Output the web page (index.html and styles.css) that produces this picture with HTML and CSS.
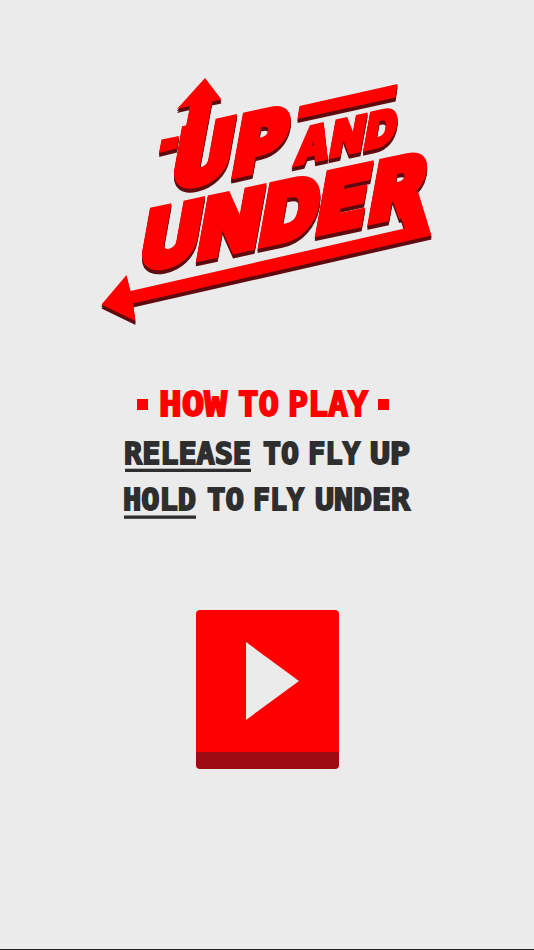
FILE: index.html
```html
<!DOCTYPE html>
<html lang="en">
<head>
    <meta charset="UTF-8">
    <meta name="viewport" content="width=device-width, initial-scale=1.0">
    <title>Up and Under</title>
    <link rel="stylesheet" href="styles.css">
</head>
<body>
    <div id="start-screen">
        <svg class="logo" viewBox="100 70 334 260">
            <g class="logo-shape">
                <!-- up arrow and dash -->
                <polygon points="205,78 221.5,99.5 212,101.5 199,172 177,172 190,106 177,109"/>
                <polygon points="161.5,139.5 179,136 177,148.5 159,153"/>
                <!-- bar over AND -->
                <polygon points="299.5,106 397.5,84 395.5,97.5 297.5,119"/>
                <!-- R leg running into the long arrow -->
                <polygon points="101.5,304.5 126.5,275 130.5,291 404.5,228.5 397,204 402,190 418,191.5 431.5,235.5 133,303.5 135.5,321"/>
                <text class="big" transform="matrix(.94 -.208 -.18 1 170 190)" x="0 65">UP</text>
                <text class="small" transform="matrix(.86 -.19 -.18 1 293 165.5)" x="0 41 81">AND</text>
                <text class="big" transform="matrix(.94 -.2 -.18 1 138 271.5)" x="0 61.5 127 188 244">UNDER</text>
            </g>
        </svg>

        <div class="instructions">
            <svg class="line title" viewBox="120 380 294 50">
                <rect x="137" y="399" width="11" height="11"/>
                <text x="159" y="415.5" textLength="68" lengthAdjust="spacingAndGlyphs">HOW</text>
                <text x="238" y="415.5" textLength="41" lengthAdjust="spacingAndGlyphs">TO</text>
                <text x="288" y="415.5" textLength="80" lengthAdjust="spacingAndGlyphs">PLAY</text>
                <rect x="378" y="399" width="11" height="11"/>
            </svg>
            <svg class="line" viewBox="120 430 294 50">
                <text x="124" y="463.5" textLength="127" lengthAdjust="spacingAndGlyphs">RELEASE</text>
                <text x="263" y="463.5" textLength="36" lengthAdjust="spacingAndGlyphs">TO</text>
                <text x="308" y="463.5" textLength="52" lengthAdjust="spacingAndGlyphs">FLY</text>
                <text x="370" y="463.5" textLength="40" lengthAdjust="spacingAndGlyphs">UP</text>
                <rect x="125" y="468.7" width="126" height="3.3"/>
            </svg>
            <svg class="line" viewBox="120 480 294 50">
                <text x="123" y="510" textLength="73" lengthAdjust="spacingAndGlyphs">HOLD</text>
                <text x="207" y="510" textLength="37" lengthAdjust="spacingAndGlyphs">TO</text>
                <text x="253" y="510" textLength="51" lengthAdjust="spacingAndGlyphs">FLY</text>
                <text x="315" y="510" textLength="95" lengthAdjust="spacingAndGlyphs">UNDER</text>
                <rect x="124" y="515.5" width="72" height="3.3"/>
            </svg>
        </div>

        <button class="play-button" aria-label="Play">
            <svg viewBox="0 0 53 78"><polygon points="0,0 53,39 0,78"/></svg>
        </button>
    </div>
</body>
</html>
```
FILE: styles.css
```css
body {
    margin: 0;
    background-color: #ebebeb;
    font-family: Inter, "Liberation Sans", sans-serif;
}

#start-screen {
    display: flex;
    flex-direction: column;
    align-items: center;
    box-sizing: border-box;
    height: 950px;
    padding-top: 70px;
    border-bottom: 1px solid #231f20;
    overflow: hidden;
}

.logo {
    width: 334px;
    height: 260px;
    flex-shrink: 0;
}

.logo-shape {
    fill: #ff0000;
    font-weight: 900;
    filter: drop-shadow(0 2px 0 #5e0b10) drop-shadow(0 2px 0 #5e0b10);
}

.logo-shape text {
    stroke: #ff0000;
    stroke-linejoin: miter;
    stroke-miterlimit: 2;
}

.big {
    font-size: 83px;
    stroke-width: 6.5px;
}

.small {
    font-size: 50px;
    stroke-width: 3.5px;
}

.instructions {
    display: flex;
    flex-direction: column;
    margin-top: 50px;
}

.line {
    width: 294px;
    height: 50px;
    fill: #2e2e2e;
    font-family: "DejaVu Sans Mono", monospace;
    font-size: 30px;
    font-weight: bold;
}

.line text {
    stroke: #2e2e2e;
    stroke-width: 1.8px;
    stroke-linejoin: miter;
}

.title {
    fill: #ff0000;
    font-size: 33px;
}

.title text {
    stroke: #ff0000;
}

.play-button {
    display: flex;
    justify-content: center;
    box-sizing: border-box;
    width: 143px;
    height: 159px;
    margin-top: 80px;
    padding: 32px 0 0 11px;
    border: none;
    border-bottom: 17px solid #9e0b12;
    border-radius: 4px;
    background-color: #ff0000;
    cursor: pointer;
    flex-shrink: 0;
}

.play-button svg {
    width: 53px;
    height: 78px;
    fill: #ebebeb;
}
```
